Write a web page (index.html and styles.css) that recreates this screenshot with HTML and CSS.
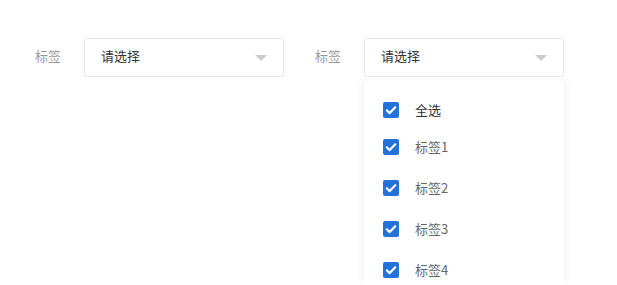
FILE: index.html
```html
<!DOCTYPE html>
<html lang="zh-CN">
<head>
  <meta charset="UTF-8" />
  <title>标签选择</title>
  <link rel="stylesheet" href="styles.css">
</head>
<body>
  <div class="filters">
    <div class="field">
      <span class="field-label">标签</span>
      <div class="select">
        <span class="select-text">请选择</span>
        <span class="arrow"></span>
      </div>
    </div>
    <div class="field">
      <span class="field-label">标签</span>
      <div class="select-wrap">
        <div class="select">
          <span class="select-text">请选择</span>
          <span class="arrow"></span>
        </div>
        <div class="option-panel">
          <div class="option option-all">
            <span class="check"><svg viewBox="0 0 16 16"><path d="M3.8 8.3l2.9 2.8 5.6-5.8"/></svg></span>
            <span>全选</span>
          </div>
          <div class="option">
            <span class="check"><svg viewBox="0 0 16 16"><path d="M3.8 8.3l2.9 2.8 5.6-5.8"/></svg></span>
            <span>标签1</span>
          </div>
          <div class="option">
            <span class="check"><svg viewBox="0 0 16 16"><path d="M3.8 8.3l2.9 2.8 5.6-5.8"/></svg></span>
            <span>标签2</span>
          </div>
          <div class="option">
            <span class="check"><svg viewBox="0 0 16 16"><path d="M3.8 8.3l2.9 2.8 5.6-5.8"/></svg></span>
            <span>标签3</span>
          </div>
          <div class="option">
            <span class="check"><svg viewBox="0 0 16 16"><path d="M3.8 8.3l2.9 2.8 5.6-5.8"/></svg></span>
            <span>标签4</span>
          </div>
        </div>
      </div>
    </div>
  </div>
</body>
</html>
```

FILE: styles.css
```css
* { box-sizing: border-box; }
body {
  margin: 0;
  font-family: "Noto Sans CJK SC", "Liberation Sans", sans-serif;
  font-size: 13px;
  background-color: #fff;
}

.filters {
  display: flex;
  gap: 31px;
  padding: 38px 0 0 35px;
}

.field {
  display: flex;
  align-items: flex-start;
  gap: 23px;
}

.field-label {
  color: #999;
  line-height: 35px;
  width: 26px;
  white-space: nowrap;
}

.select-wrap {
  display: flex;
  flex-direction: column;
  gap: 3px;
}

.select {
  width: 200px;
  height: 39px;
  border: 1px solid #e6e6e6;
  border-radius: 3px;
  display: flex;
  align-items: center;
  justify-content: space-between;
  padding: 0 16px 4px 16px;
  color: #333;
}

.arrow {
  width: 0;
  height: 0;
  border-left: 6px solid transparent;
  border-right: 6px solid transparent;
  border-top: 6px solid #ccc;
  margin-top: 5px;
}

.option-panel {
  width: 200px;
  height: 204px;
  overflow: hidden;
  background-color: #fff;
  box-shadow: 0 2px 10px rgba(0, 0, 0, 0.07);
  padding-top: 13px;
}

.option {
  display: flex;
  align-items: center;
  gap: 16px;
  height: 41px;
  padding-left: 19px;
  color: #666;
}

.option-all {
  height: 33px;
  color: #333;
}

.check {
  width: 16px;
  height: 16px;
  border-radius: 2px;
  background-color: #2372dc;
  display: flex;
}

.check svg {
  width: 16px;
  height: 16px;
  fill: none;
  stroke: #fff;
  stroke-width: 2.2;
  stroke-linecap: round;
  stroke-linejoin: round;
}
```
